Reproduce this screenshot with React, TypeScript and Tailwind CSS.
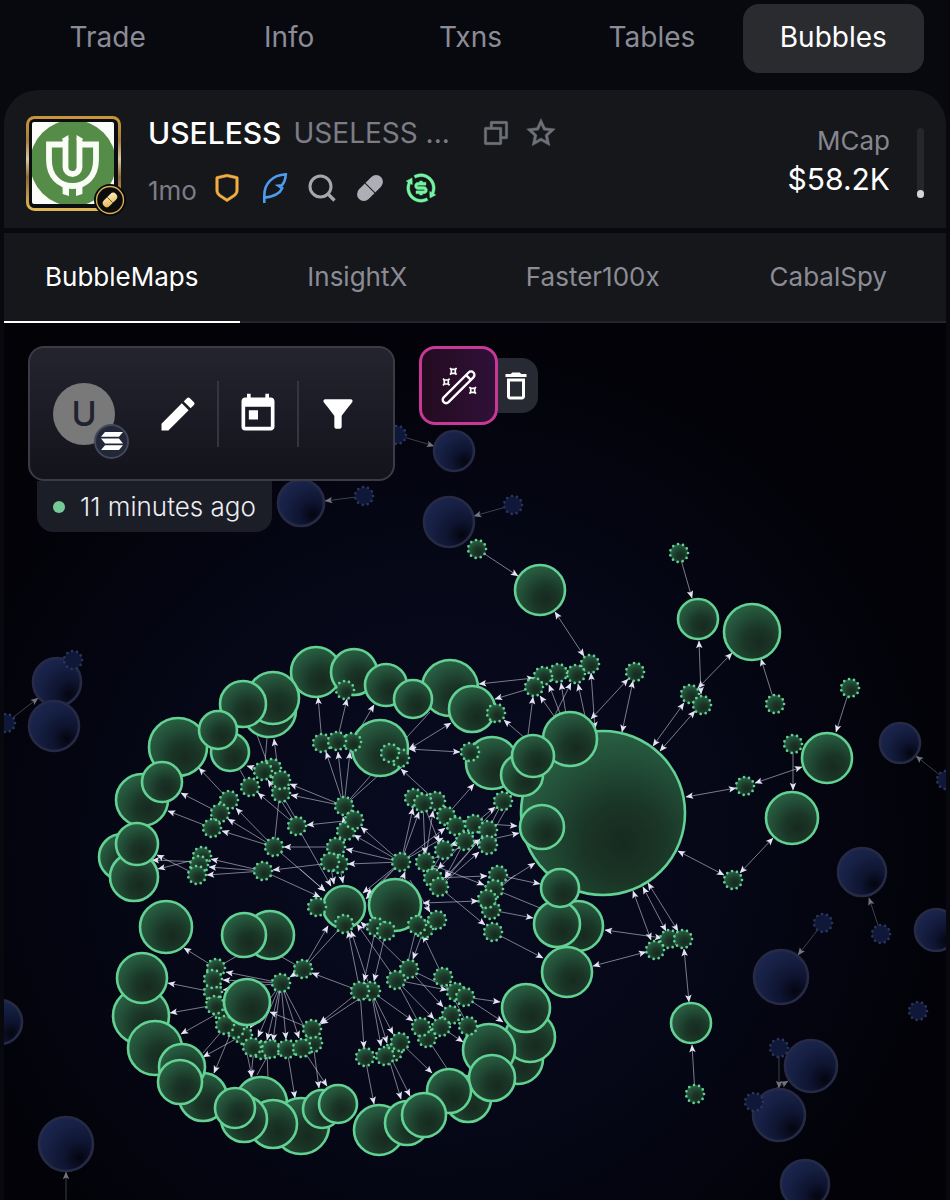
import { useState } from "react";
import { MdDeleteOutline, MdEdit, MdFilterAlt, MdToday } from "react-icons/md";
import {
  RiCheckboxMultipleBlankLine,
  RiExchangeDollarLine,
  RiShieldLine,
  RiStarLine,
} from "react-icons/ri";

const mainTabs = ["Trade", "Info", "Txns", "Tables", "Bubbles"];
const mapTabs = ["BubbleMaps", "InsightX", "Faster100x", "CabalSpy"];

// x, y, radius - painted in order, later ones on top
const holders: number[][] = [
  [603, 813, 82],
  [540, 590, 25],
  [698, 619, 20],
  [752, 632, 28],
  [827, 758, 25],
  [792, 818, 26],
  [691, 1023, 20],
  [570, 739, 27],
  [316, 672, 25],
  [269, 710, 27],
  [273, 698, 26],
  [243, 704, 23],
  [230, 752, 19],
  [178, 747, 29],
  [218, 730, 19],
  [142, 800, 26],
  [162, 782, 20],
  [122, 857, 23],
  [134, 877, 24],
  [137, 844, 21],
  [354, 672, 23],
  [386, 685, 21],
  [450, 688, 28],
  [413, 699, 19],
  [472, 709, 23],
  [380, 748, 28],
  [492, 763, 26],
  [522, 775, 21],
  [533, 756, 21],
  [542, 827, 22],
  [344, 907, 21],
  [395, 905, 26],
  [578, 926, 25],
  [557, 924, 23],
  [560, 888, 19],
  [567, 972, 25],
  [166, 927, 26],
  [141, 1016, 28],
  [142, 978, 25],
  [155, 1048, 27],
  [203, 1097, 24],
  [182, 1067, 23],
  [180, 1082, 22],
  [270, 935, 24],
  [244, 935, 22],
  [261, 1103, 26],
  [301, 1126, 28],
  [273, 1124, 24],
  [244, 1119, 23],
  [235, 1108, 20],
  [322, 1109, 19],
  [338, 1104, 19],
  [518, 1059, 25],
  [530, 1037, 25],
  [526, 1008, 24],
  [489, 1050, 26],
  [468, 1099, 23],
  [492, 1078, 23],
  [449, 1091, 22],
  [379, 1130, 25],
  [407, 1123, 22],
  [424, 1115, 22],
];

const wallets: number[][] = [
  [345, 690], [496, 713], [322, 743], [352, 742], [337, 741], [400, 758], [390, 753], [470, 752],
  [272, 768], [263, 771], [281, 793], [281, 780], [250, 787], [229, 800], [220, 813], [212, 828],
  [202, 856], [199, 865], [197, 875], [297, 826], [274, 847], [263, 871], [344, 806], [346, 831],
  [354, 820], [336, 847], [339, 864], [330, 862], [414, 798], [436, 801], [423, 803], [446, 816],
  [456, 826], [474, 824], [465, 841], [488, 830], [488, 845], [503, 801], [444, 850], [401, 862],
  [425, 862], [433, 878], [439, 887], [498, 875], [494, 889], [491, 910], [487, 899], [493, 932],
  [317, 907], [344, 924], [376, 927], [386, 931], [424, 929], [417, 925], [437, 920], [409, 969],
  [396, 980], [443, 977], [456, 992], [465, 997], [371, 991], [360, 991], [451, 1015], [427, 1038],
  [421, 1027], [441, 1027], [468, 1026], [393, 1052], [400, 1042], [385, 1056], [365, 1057],
  [281, 983], [303, 969], [216, 968], [213, 992], [213, 979], [222, 1011], [215, 1005], [243, 1035],
  [235, 1029], [225, 1025], [262, 1050], [252, 1047], [271, 1049], [287, 1049], [313, 1043],
  [302, 1048], [312, 1029], [477, 549], [679, 553], [590, 664], [576, 674], [558, 673], [543, 676],
  [534, 687], [635, 672], [690, 694], [702, 705], [775, 704], [850, 688], [793, 744], [745, 786],
  [733, 880], [669, 939], [683, 939], [655, 950], [695, 1094],
];

// bubbles that sit over the wallets around them
const frontHolders: number[][] = [[247, 1002, 23]];

const otherHolders: number[][] = [
  [454, 451, 20],
  [301, 503, 23],
  [449, 522, 25],
  [57, 682, 24],
  [54, 726, 25],
  [0, 1022, 22],
  [66, 1144, 27],
  [900, 743, 20],
  [862, 872, 24],
  [936, 930, 21],
  [781, 977, 27],
  [811, 1066, 26],
  [779, 1115, 26],
  [805, 1184, 24],
];

const otherWallets: number[][] = [
  [397, 435], [364, 496], [513, 505], [73, 660], [6, 723], [946, 780], [823, 923], [881, 934],
  [918, 1011], [779, 1048], [754, 1102],
];

// from x, from y, to x, to y
const transfers: number[][] = [
  [322, 743, 318, 697], [337, 741, 347, 699], [352, 742, 374, 705], [281, 793, 274, 739],
  [263, 771, 247, 766], [297, 826, 268, 780], [344, 806, 290, 784], [344, 806, 291, 795],
  [297, 826, 258, 793], [229, 800, 199, 768], [220, 813, 181, 793], [212, 828, 168, 811],
  [274, 847, 236, 808], [274, 847, 228, 819], [274, 847, 222, 831], [354, 820, 307, 825],
  [336, 847, 284, 847], [339, 862, 273, 870], [263, 871, 211, 859], [263, 871, 209, 867],
  [263, 871, 207, 875], [197, 875, 157, 855], [202, 862, 152, 860], [202, 858, 158, 869],
  [297, 826, 331, 886], [274, 847, 325, 891], [263, 871, 320, 897], [535, 687, 495, 699],
  [533, 745, 504, 720], [344, 806, 326, 752], [344, 806, 338, 752], [344, 806, 350, 752],
  [346, 831, 343, 817], [401, 862, 361, 827], [401, 862, 354, 835], [401, 862, 346, 849],
  [401, 862, 348, 864], [401, 862, 413, 808], [401, 862, 419, 812], [423, 803, 425, 854],
  [423, 803, 439, 842], [425, 862, 433, 811], [436, 801, 401, 769], [446, 816, 474, 784],
  [474, 824, 495, 807], [488, 824, 517, 826], [488, 840, 519, 833], [474, 824, 445, 878],
  [503, 801, 438, 869], [488, 830, 445, 878], [439, 887, 480, 839], [439, 887, 479, 852],
  [401, 862, 443, 838], [401, 862, 445, 828], [425, 862, 478, 840], [465, 841, 450, 845],
  [433, 878, 487, 876], [425, 862, 484, 885], [439, 887, 485, 925], [494, 889, 535, 863],
  [498, 875, 540, 884], [491, 910, 533, 918], [493, 932, 543, 958], [339, 864, 343, 883],
  [330, 862, 334, 884], [401, 862, 363, 893], [401, 862, 367, 895], [401, 862, 366, 899],
  [300, 869, 325, 891], [444, 850, 430, 873], [402, 880, 405, 872], [410, 880, 430, 912],
  [424, 929, 413, 959], [443, 977, 423, 935], [360, 991, 348, 931], [371, 991, 351, 931],
  [376, 927, 364, 981], [386, 931, 374, 981], [396, 980, 357, 924], [409, 969, 361, 922],
  [303, 969, 328, 926], [360, 991, 312, 973], [360, 991, 320, 1023], [371, 991, 321, 1024],
  [360, 991, 364, 1048], [371, 991, 381, 1046], [371, 991, 387, 1043], [371, 991, 393, 1034],
  [371, 991, 413, 1021], [396, 980, 434, 1019], [409, 969, 443, 1007], [396, 980, 447, 990],
  [465, 997, 500, 1002], [465, 997, 503, 1022], [441, 1027, 463, 1042], [400, 1042, 432, 1073],
  [365, 1057, 374, 1104], [388, 1056, 401, 1099], [390, 1056, 410, 1096], [216, 968, 184, 948],
  [213, 992, 168, 983], [215, 1005, 170, 1013], [222, 1011, 181, 1034], [243, 1035, 203, 1057],
  [232, 1030, 214, 1073], [243, 1035, 252, 1077], [254, 1048, 251, 1077], [287, 1049, 295, 1098],
  [313, 1043, 319, 1088], [302, 1048, 327, 1086], [281, 983, 226, 972], [281, 983, 223, 980],
  [281, 983, 223, 990], [281, 983, 258, 1037], [281, 983, 267, 1040], [281, 983, 273, 1041],
  [281, 983, 286, 1039], [281, 983, 299, 1038], [281, 983, 250, 1028], [312, 1029, 270, 1012],
  [303, 969, 290, 977], [477, 549, 518, 576], [679, 553, 692, 598], [775, 704, 761, 659],
  [570, 739, 540, 696], [570, 739, 549, 685], [570, 739, 561, 683], [550, 725, 571, 683],
  [590, 739, 578, 684], [528, 735, 533, 697], [850, 688, 836, 732], [793, 744, 793, 790],
  [695, 1094, 692, 1045],
];

const swaps: number[][] = [
  [409, 749, 451, 723], [409, 749, 460, 752], [479, 684, 534, 678], [423, 903, 478, 901],
  [555, 612, 584, 656], [699, 641, 701, 694], [732, 653, 698, 688], [653, 746, 684, 703],
  [660, 751, 695, 711], [622, 732, 633, 681], [591, 719, 628, 679], [595, 729, 591, 673],
  [755, 783, 802, 767], [686, 797, 736, 788], [678, 851, 724, 875], [740, 873, 773, 838],
  [633, 891, 651, 940], [643, 887, 666, 931], [648, 883, 678, 931], [605, 930, 662, 938],
  [593, 966, 646, 952], [684, 949, 689, 1002],
];

const plainLinks: number[][] = [
  [274, 847, 281, 780], [257, 735, 267, 762], [267, 738, 265, 762], [240, 770, 248, 784],
  [407, 737, 430, 712], [344, 806, 372, 774], [344, 806, 380, 774], [494, 889, 540, 908],
  [417, 925, 408, 962], [303, 969, 344, 924], [396, 980, 421, 1027], [443, 977, 464, 1018],
  [409, 969, 456, 992], [427, 1038, 448, 1070], [203, 1053, 222, 1031], [257, 1075, 267, 1057],
  [267, 1052, 268, 1078], [281, 983, 306, 1030], [216, 968, 237, 956], [303, 969, 280, 956],
  [488, 898, 515, 875], [503, 801, 488, 830], [509, 804, 497, 825], [281, 793, 300, 826],
];

const otherTransfers: number[][] = [
  [397, 435, 434, 446], [364, 496, 325, 501], [513, 505, 474, 516], [6, 723, 38, 698],
  [66, 1210, 66, 1172], [823, 923, 798, 955], [881, 934, 869, 898], [779, 1048, 779, 1088],
  [754, 1102, 788, 1081], [946, 780, 916, 756],
];

const Links = ({ items, kind }: { items: number[][]; kind: "to" | "both" | "none" }) => (
  <g stroke="#d9daea" strokeOpacity="0.55" strokeWidth="1">
    {items.map(([x1, y1, x2, y2], i) => (
      <line
        key={i}
        x1={x1}
        y1={y1}
        x2={x2}
        y2={y2}
        markerEnd={kind === "none" ? undefined : "url(#arrow)"}
        markerStart={kind === "both" ? "url(#arrow)" : undefined}
      />
    ))}
  </g>
);

const BigBubbles = ({ items, fill, stroke }: { items: number[][]; fill: string; stroke: string }) => (
  <g fill={fill} stroke={stroke} strokeWidth="2.6">
    {items.map(([x, y, r], i) => (
      <circle key={i} cx={x} cy={y} r={r} />
    ))}
  </g>
);

const SmallBubbles = ({ items, fill, stroke }: { items: number[][]; fill: string; stroke: string }) => (
  <g>
    {items.map(([x, y], i) => (
      <g key={i}>
        <circle cx={x} cy={y} r="9" fill={fill} />
        <circle
          cx={x}
          cy={y}
          r="9"
          fill="none"
          stroke={stroke}
          strokeWidth="2.7"
          strokeLinecap="round"
          strokeDasharray="0 5.141"
        />
      </g>
    ))}
  </g>
);

const BubbleGraph = () => (
  <svg viewBox="4 323 942 877" className="block h-auto w-full" role="img" aria-label="Holder bubble map">
    <defs>
      <radialGradient id="space" gradientUnits="userSpaceOnUse" cx="440" cy="850" r="600">
        <stop offset="0" stopColor="#080b20" />
        <stop offset="0.45" stopColor="#060818" />
        <stop offset="0.85" stopColor="#020208" />
        <stop offset="1" stopColor="#020207" />
      </radialGradient>
      <radialGradient id="green" cx="0.62" cy="0.68" r="0.7">
        <stop offset="0" stopColor="#172a20" />
        <stop offset="0.35" stopColor="#1a3526" />
        <stop offset="0.8" stopColor="#24543b" />
        <stop offset="1" stopColor="#2a6144" />
      </radialGradient>
      <radialGradient id="blue" cx="0.76" cy="0.76" r="0.8">
        <stop offset="0" stopColor="#04050e" />
        <stop offset="0.35" stopColor="#0e1430" />
        <stop offset="0.8" stopColor="#172145" />
        <stop offset="1" stopColor="#1a244c" />
      </radialGradient>
      <marker
        id="arrow"
        markerUnits="userSpaceOnUse"
        markerWidth="9"
        markerHeight="8"
        refX="8"
        refY="4"
        viewBox="0 0 9 8"
        orient="auto-start-reverse"
      >
        <path d="M8.5 4 0.8 7.2 2.4 4 0.8 0.8Z" fill="#e4e4f4" stroke="none" />
      </marker>
    </defs>
    <rect x="4" y="323" width="942" height="877" fill="url(#space)" />
    <g opacity="0.5">
      <Links items={otherTransfers} kind="to" />
    </g>
    <BigBubbles items={otherHolders} fill="url(#blue)" stroke="#262a45" />
    <SmallBubbles items={otherWallets} fill="#0f1838" stroke="#2b345a" />
    <Links items={plainLinks} kind="none" />
    <Links items={transfers} kind="to" />
    <Links items={swaps} kind="both" />
    <BigBubbles items={holders} fill="url(#green)" stroke="#62d193" />
    <SmallBubbles items={wallets} fill="url(#green)" stroke="#62d193" />
    <BigBubbles items={frontHolders} fill="url(#green)" stroke="#62d193" />
  </svg>
);

const TokenLogo = () => (
  <svg viewBox="0 0 100 100" className="h-[100px] w-[100px] shrink-0" role="img" aria-label="USELESS logo">
    <defs>
      <linearGradient id="gold" x1="0" y1="0" x2="0" y2="1">
        <stop offset="0" stopColor="#c8953a" />
        <stop offset="0.25" stopColor="#a57d3c" />
        <stop offset="0.45" stopColor="#d8c7a2" />
        <stop offset="0.65" stopColor="#8e6a35" />
        <stop offset="1" stopColor="#e0b758" />
      </linearGradient>
      <linearGradient id="pill" x1="1" y1="0" x2="0" y2="1">
        <stop offset="0" stopColor="#fdf0c4" />
        <stop offset="1" stopColor="#e2b34f" />
      </linearGradient>
      <clipPath id="tile">
        <rect x="6" y="6" width="82" height="82" rx="2" />
      </clipPath>
    </defs>
    <rect x="1.5" y="1.5" width="92" height="92" rx="7" fill="#0c0d10" stroke="url(#gold)" strokeWidth="3" />
    <g clipPath="url(#tile)">
      <rect x="6" y="6" width="82" height="82" fill="#fbfdf8" />
      <circle cx="47" cy="47" r="43" fill="#558c47" />
      <g fill="none" stroke="#fafdf6" strokeWidth="5.8">
        <path d="M39 28.500H23V44C23 60 33 70 46.500 70S70 60 70 44V28.500H54" />
        <path d="M39.500 22V51a7 7 0 0 0 14 0V22" />
      </g>
      <path d="M36.600 22.500 42.400 19V24h-5.800ZM50.600 19l5.800 3.500V24h-5.800ZM36.600 70h6.400v10l-6.400-2ZM50 70h6.400v8L50 80Z" fill="#fafdf6" />
    </g>
    <circle cx="84" cy="84" r="16" fill="#07080b" />
    <circle cx="84" cy="84" r="13.500" fill="#0d0c0c" stroke="#d9ac55" strokeWidth="1.400" />
    <g transform="rotate(-45 84 84)">
      <rect x="75.500" y="80" width="17" height="8" rx="4" fill="url(#pill)" />
      <path d="M84 80v8" stroke="#5b4521" strokeWidth="0.800" />
    </g>
  </svg>
);

const LeafIcon = () => (
  <svg viewBox="0 0 26 32" className="h-8 w-[26px]" fill="none" stroke="#4a9df0" strokeWidth="2.6">
    <path d="M2.300 31V23.500C2.300 12 10 3.200 23.800 2.300 23.600 7 22.300 10.500 20 13.200L16.300 13.600 20.200 16.200C17.800 21.500 11.500 24.600 2.800 25.600" />
  </svg>
);

const SearchIcon = () => (
  <svg viewBox="0 0 28 28" className="h-7 w-7" fill="none" stroke="#a6a7ae" strokeWidth="3">
    <circle cx="12.500" cy="12.500" r="10.500" />
    <path d="m19.500 19.500 7 7" strokeWidth="3.400" />
  </svg>
);

const PillIcon = () => (
  <svg viewBox="0 0 28 28" className="h-7 w-7">
    <g transform="rotate(-45 14 14)">
      <rect x="-1.500" y="7.200" width="31" height="13.600" rx="6.800" fill="#adaeb6" />
      <path d="M14 7v14" stroke="#16171b" strokeWidth="1" />
    </g>
  </svg>
);

const WandIcon = () => (
  <svg viewBox="0 0 36 38" className="h-[38px] w-9" fill="none" stroke="#fff" strokeWidth="2.4">
    <g transform="rotate(-45 17.5 20.3)">
      <rect x="-3.500" y="17" width="42" height="6.800" rx="3.400" />
      <path d="M31.500 17v6.800" />
    </g>
    <g strokeWidth="1.700">
      <path d="M10.300 2.300h4v4h-4ZM3.300 13h4v4h-4ZM29.700 21.300h4v4h-4Z" />
      <path d="m9 1 1.300 1.300m4 0L15.600 1M9 7.600l1.300-1.300m4 0 1.300 1.300M2 11.700 3.300 13m4 0 1.300-1.300M2 18.300 3.300 17m4 0 1.300 1.300M28.400 20l1.300 1.300m4 0L35 20M28.400 26.600l1.300-1.300m4 0 1.300 1.300" />
    </g>
  </svg>
);

const SolanaIcon = () => (
  <svg viewBox="0 0 22 18" className="h-[18px] w-[22px]" fill="#fff">
    <path d="M4 0H22l-4 4.800H0ZM0 6.600h18l4 4.800H4ZM4 13.200H22L18 18H0Z" />
  </svg>
);

const TokenHeader = () => (
  <header className="flex items-start gap-[22px] rounded-t-[34px] bg-[#16171b] px-[22px] pt-[25px] pb-3">
    <div className="pt-px">
      <TokenLogo />
    </div>
    <div className="flex flex-col gap-4">
      <div className="flex items-center">
        <h1 className="text-[30px] leading-9 font-medium text-white">USELESS</h1>
        <span className="ml-3 text-[28px] leading-8 text-[#7c7d86]">USELESS ...</span>
        <button type="button" aria-label="Copy address" className="ml-8 text-[#6f7179]">
          <RiCheckboxMultipleBlankLine size={28} stroke="currentColor" strokeWidth={0.4} />
        </button>
        <button type="button" aria-label="Add to favourites" className="ml-4 text-[#6f7179]">
          <RiStarLine size={30} stroke="currentColor" strokeWidth={0.4} />
        </button>
      </div>
      <div className="flex items-center">
        <span className="mr-[15px] pt-[6px] text-[26px] leading-9 text-[#7c7d86]">1mo</span>
        <div className="flex items-center gap-5">
          <RiShieldLine size={30} color="#f2ae43" stroke="#f2ae43" strokeWidth={0.4} />
          <LeafIcon />
          <SearchIcon />
          <PillIcon />
          <RiExchangeDollarLine size={34} color="#73f5a2" stroke="#73f5a2" strokeWidth={0.3} />
        </div>
      </div>
    </div>
    <div className="ml-auto flex items-start gap-[27px]">
      <div className="pt-2 text-right">
        <div className="text-[26px] leading-9 text-[#85868f]">MCap</div>
        <div className="text-[30px] leading-10 text-white">$58.2K</div>
      </div>
      <div className="mt-[13px] flex h-[70px] w-[7px] items-end rounded-full bg-[#25272b]">
        <div className="h-2 w-full rounded-full bg-[#d4d4d6]" />
      </div>
    </div>
  </header>
);

const MapToolbar = () => (
  <div className="absolute top-[23px] left-6 flex items-start gap-6 text-white">
    <div className="flex flex-col items-start">
      <div className="flex h-[135px] items-center rounded-2xl border-2 border-[#3a3b46] bg-linear-to-b from-[#23242e] to-[#12131b] pr-4 pl-[23px]">
        <div className="relative mr-[41px] flex h-[62px] w-[62px] items-center justify-center rounded-full bg-[#797979] text-[34px] leading-10 font-medium text-[#20222e]">
          U
          <span className="absolute -right-[14px] -bottom-[14px] flex h-[35px] w-[35px] items-center justify-center rounded-full border-2 border-[#43475a] bg-[#23273a]">
            <SolanaIcon />
          </span>
        </div>
        <button type="button" aria-label="Edit" className="mr-[17px]">
          <MdEdit size={44} />
        </button>
        <span className="h-[66px] w-[2px] bg-[#34353f]" />
        <button type="button" aria-label="Pick a date" className="mx-[17px]">
          <MdToday size={44} />
        </button>
        <span className="h-[66px] w-[2px] bg-[#34353f]" />
        <button type="button" aria-label="Filter" className="mx-[17px]">
          <MdFilterAlt size={44} />
        </button>
      </div>
      <div className="ml-[9px] flex h-[51px] items-center gap-[15px] rounded-b-2xl bg-[#1b1d27] px-4 text-[26px] leading-8 font-light text-[#eeeef2]">
        <span className="h-3 w-3 rounded-full bg-[#74cb96]" />
        11 minutes ago
      </div>
    </div>
    <div className="flex items-center">
      <button
        type="button"
        aria-label="Magic nodes"
        className="flex h-[79px] w-[79px] items-center justify-center rounded-2xl border-3 border-[#c73995] bg-linear-to-r from-[#240b20] to-[#2f1038]"
      >
        <WandIcon />
      </button>
      <button
        type="button"
        aria-label="Delete"
        className="flex h-[55px] w-10 items-center rounded-r-2xl bg-[#272a32]"
      >
        <MdDeleteOutline size={36} />
      </button>
    </div>
  </div>
);

export default function App() {
  const [mainTab, setMainTab] = useState("Bubbles");
  const [mapTab, setMapTab] = useState("BubbleMaps");

  return (
    <div className="min-h-screen bg-[#08090f] font-['Inter',sans-serif]">
      <nav className="grid grid-cols-5 pt-1 pr-[26px] pb-[17px] pl-[17px]">
        {mainTabs.map((tab) => (
          <button
            key={tab}
            type="button"
            onClick={() => setMainTab(tab)}
            className={
              tab === mainTab
                ? "h-[69px] rounded-2xl bg-[#292b2f] pb-1 text-[28px] leading-9 text-white"
                : "h-[69px] rounded-2xl pb-1 text-[28px] leading-9 text-[#8b8c96]"
            }
          >
            {tab}
          </button>
        ))}
      </nav>

      <main className="px-1">
        <TokenHeader />
        <div className="mt-[5px] grid grid-cols-4 bg-[#16171b]">
          {mapTabs.map((tab) => (
            <button
              key={tab}
              type="button"
              onClick={() => setMapTab(tab)}
              className={
                tab === mapTab
                  ? "h-[90px] border-b-2 border-white text-[26px] leading-8 text-white"
                  : "h-[90px] border-b-2 border-[#23252c] text-[26px] leading-8 text-[#8b8c96]"
              }
            >
              {tab}
            </button>
          ))}
        </div>
        <section className="relative overflow-hidden">
          <BubbleGraph />
          <MapToolbar />
        </section>
      </main>
    </div>
  );
}
